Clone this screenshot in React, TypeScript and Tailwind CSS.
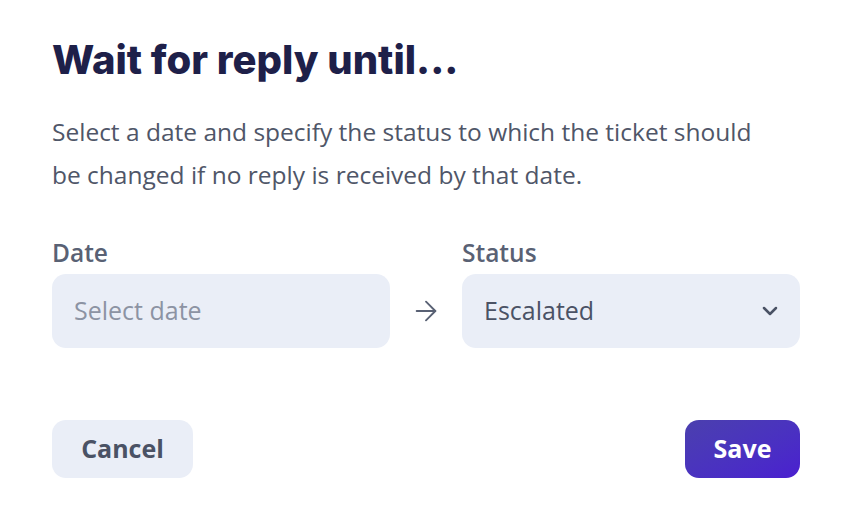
import { ArrowRight, ChevronDown } from "lucide-react";

export default function App() {
  return (
    <main className="w-[858px] h-[513px] bg-white px-[52px] pt-[36px] font-['Open_Sans',sans-serif]">
      <h1 className="text-[40px] leading-[48px] font-extrabold tracking-[0px] text-[#1e2049] font-['Inter',sans-serif]">
        Wait for reply until...
      </h1>

      <p className="mt-[26px] w-[730px] text-[24.5px] leading-[43px] text-[#4f5668]">
        Select a date and specify the status to which the ticket should be changed if no reply is received by that date.
      </p>

      <div className="mt-[41px] flex items-end">
        <div className="w-[338px]">
          <label className="block text-[24.5px] leading-[32px] font-semibold text-[#596174]">Date</label>
          <div className="mt-[5px] h-[74px] rounded-[14px] bg-[#eaeef7] px-[22px] flex items-center text-[25px] text-[#8c93a3]">
            Select date
          </div>
        </div>

        <div className="w-[72px] h-[74px] flex items-center justify-center text-[#596174]">
          <ArrowRight size={32} strokeWidth={1.4} />
        </div>

        <div className="w-[338px]">
          <label className="block text-[24.5px] leading-[32px] font-semibold text-[#596174]">Status</label>
          <div className="mt-[5px] h-[74px] rounded-[14px] bg-[#eaeef7] pl-[22px] pr-[18px] flex items-center justify-between text-[25px] text-[#4a5265]">
            <span>Escalated</span>
            <ChevronDown size={24} strokeWidth={2.5} className="text-[#4a5265]" />
          </div>
        </div>
      </div>

      <div className="mt-[72px] flex items-center justify-between w-[748px]">
        <button className="h-[58px] w-[141px] rounded-[14px] bg-[#eaeef7] text-[25px] font-bold text-[#4a5265]">
          Cancel
        </button>
        <button className="h-[58px] w-[115px] rounded-[14px] bg-gradient-to-br from-[#4b3fae] to-[#4a1ed0] text-[25px] font-bold text-white">
          Save
        </button>
      </div>
    </main>
  );
}
